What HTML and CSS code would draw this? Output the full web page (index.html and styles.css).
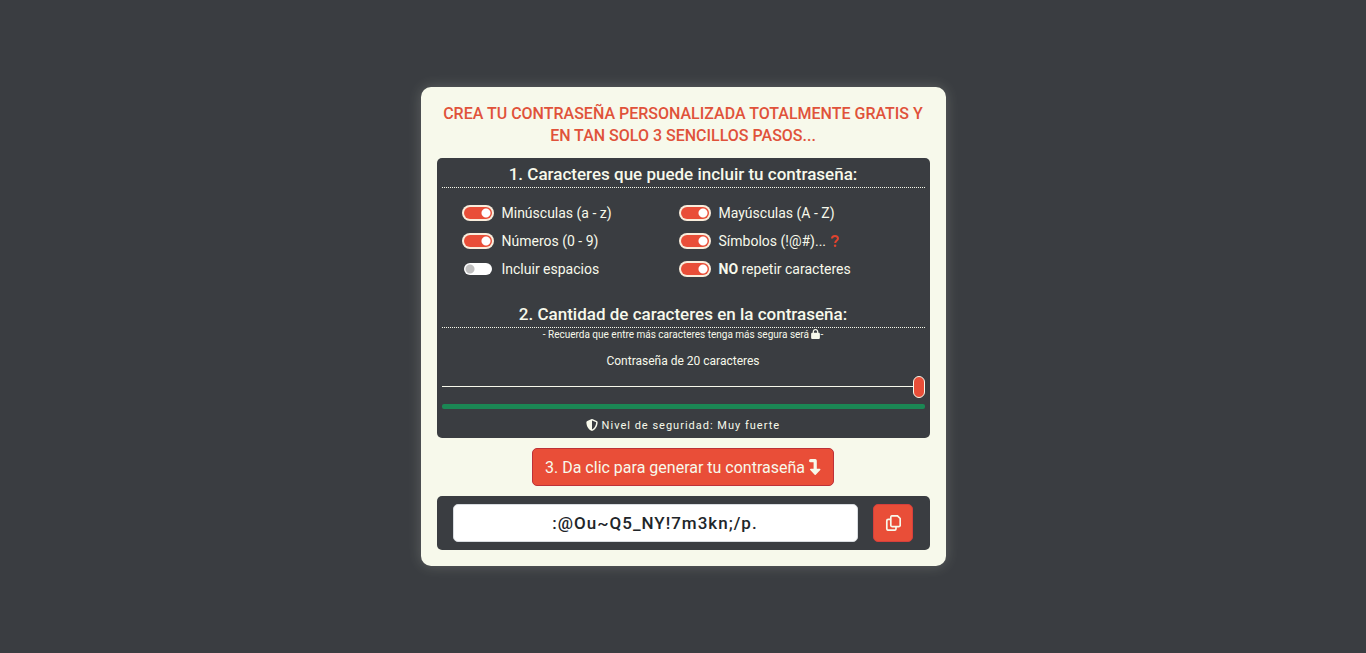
FILE: index.html
```html
<!DOCTYPE html>
<html lang="es">
<head>
<meta charset="utf-8">
<meta name="viewport" content="width=device-width, initial-scale=1">
<title>Generador de contraseñas</title>
<link rel="stylesheet" href="styles.css">
</head>
<body>
<main class="card">
  <h1 class="title">CREA TU CONTRASEÑA PERSONALIZADA TOTALMENTE GRATIS Y EN TAN SOLO 3 SENCILLOS PASOS...</h1>
  <section class="panel">
    <h2 class="step">1. Caracteres que puede incluir tu contraseña:</h2>
    <div class="options">
      <div class="column">
        <label class="option"><input class="switch" type="checkbox" checked><span>Minúsculas (a - z)</span></label>
        <label class="option"><input class="switch" type="checkbox" checked><span>Números (0 - 9)</span></label>
        <label class="option"><input class="switch" type="checkbox"><span>Incluir espacios</span></label>
      </div>
      <div class="column">
        <label class="option"><input class="switch" type="checkbox" checked><span>Mayúsculas (A - Z)</span></label>
        <label class="option"><input class="switch" type="checkbox" checked><span>Símbolos (!@#)...</span>
          <svg class="help" viewBox="0 0 8 12" aria-hidden="true"><path d="M1 3.6C1 1.8 2.4 1 4 1s3 .9 3 2.6C7 5.600 4.400 5.500 4.200 8" fill="none" stroke="currentColor" stroke-width="2"/><circle cx="4.100" cy="10.700" r="1.250" fill="currentColor"/></svg>
        </label>
        <label class="option"><input class="switch" type="checkbox" checked><span><b>NO</b> repetir caracteres</span></label>
      </div>
    </div>
    <h2 class="step">2. Cantidad de caracteres en la contraseña:</h2>
    <p class="hint">- Recuerda que entre más caracteres tenga más segura será
      <svg class="lock" viewBox="0 0 448 512" aria-hidden="true"><path fill="currentColor" d="M144 144v48h160v-48c0-44-36-80-80-80s-80 36-80 80zM80 192v-48C80 64 144 0 224 0s144 64 144 144v48h16c35 0 64 29 64 64v192c0 35-29 64-64 64H64c-35 0-64-29-64-64V256c0-35 29-64 64-64z"/></svg>-</p>
    <label class="length" for="length">Contraseña de 20 caracteres</label>
    <input class="slider" id="length" type="range" min="4" max="20" value="20">
    <div class="strength"></div>
    <p class="level">
      <svg class="shield" viewBox="0 0 512 512" aria-hidden="true"><path fill="currentColor" d="M256 0c5 0 9 1 13 3l188 80c22 9 39 31 39 57-1 100-41 281-214 363-17 8-36 8-52 0C57 421 17 240 16 140c0-26 17-48 39-57L243 3c4-2 8-3 13-3zm0 67v378c138-67 175-215 176-304z"/></svg>
      Nivel de seguridad: Muy fuerte</p>
  </section>
  <button class="generate" type="button">3. Da clic para generar tu contraseña
    <svg class="arrow" viewBox="0 0 12 16" aria-hidden="true"><path d="M1.600 1.700H6.200V11" fill="none" stroke="currentColor" stroke-width="3.200" stroke-linecap="round" stroke-linejoin="round"/><path d="M1.800 10.500H10.700L6.200 15.200Z" fill="currentColor" stroke="currentColor" stroke-width="1.500" stroke-linejoin="round"/></svg>
  </button>
  <section class="result">
    <input class="password" type="text" value=":@Ou~Q5_NY!7m3kn;/p." aria-label="Contraseña generada" readonly>
    <button class="copy" type="button" aria-label="Copiar">
      <svg class="copy-icon" viewBox="0 0 16 16" aria-hidden="true"><path fill="none" stroke="currentColor" stroke-width="1.700" stroke-linejoin="round" d="M7.300.8h5.200l2.700 2.700v6.700a1.500 1.500 0 0 1-1.500 1.500H7.300a1.500 1.500 0 0 1-1.500-1.500V2.300A1.500 1.500 0 0 1 7.300.8zM5.800 4.300H3.300A1.500 1.500 0 0 0 1.800 5.800v7.900a1.500 1.500 0 0 0 1.500 1.500h6.200a1.500 1.500 0 0 0 1.500-1.500v-2"/></svg>
    </button>
  </section>
</main>
</body>
</html>
```
FILE: styles.css
```css
* { box-sizing: border-box; }
body {
  margin: 0;
  min-height: 100vh;
  display: flex;
  align-items: center;
  justify-content: center;
  background: #3a3d41;
  color: #f7f9eb;
  font-family: Roboto, "Liberation Sans", sans-serif;
}
h1, h2, p { margin: 0; }
button, input { font-family: inherit; }
.card {
  width: 100%;
  max-width: 525px;
  padding: 16px;
  border-radius: 10px;
  background: #f7f9eb;
  box-shadow: 0 0 14px rgba(247, 249, 235, 0.2);
  display: flex;
  flex-direction: column;
}
.title {
  margin-bottom: 11px;
  color: #e0523a;
  font-size: 16px;
  font-weight: 500;
  line-height: 22px;
  text-align: center;
}
.panel {
  padding: 5px;
  border-radius: 5px;
  background: #3a3d41;
  display: flex;
  flex-direction: column;
}
.step {
  padding-bottom: 2px;
  border-bottom: 1px dotted #f7f9eb;
  font-size: 17px;
  font-weight: 500;
  line-height: 22px;
  text-align: center;
}
.options {
  display: grid;
  grid-template-columns: 217px 1fr;
  padding: 11px 22px 20px;
}
.column { display: flex; flex-direction: column; }
.option {
  display: flex;
  align-items: center;
  height: 28px;
  font-size: 14px;
}
.switch {
  appearance: none;
  flex: none;
  width: 28px;
  height: 12px;
  margin: 0 10px 0 0;
  border-radius: 6px;
  background: radial-gradient(circle at 6px 6px, #c0c0c0 4px, transparent 5px), #fff;
}
.switch:checked {
  background: radial-gradient(circle at 22px 6px, #fff 4px, transparent 5px), #e94e38;
  box-shadow: 0 0 0 2px #f9eddc;
}
.help { width: 8px; height: 12px; margin-left: 5px; color: #e0432f; }
.hint { font-size: 10px; line-height: 14px; text-align: center; }
.lock { width: 9px; height: 10px; vertical-align: -1px; }
.length { margin-top: 10px; font-size: 12px; line-height: 18px; text-align: center; }
.slider {
  appearance: none;
  width: 100%;
  height: 22px;
  margin: 6px 0;
  background: linear-gradient(#f7f9eb, #f7f9eb) 0 10px / 100% 1px no-repeat;
}
.slider::-webkit-slider-thumb {
  appearance: none;
  width: 12px;
  height: 22px;
  border: 1px solid #f7f9eb;
  border-radius: 6px;
  background: #e94e38;
}
.strength { height: 5px; border-radius: 2px; background: #1b8754; }
.level {
  margin-top: 10px;
  font-size: 11px;
  line-height: 14px;
  letter-spacing: 1px;
  text-align: center;
}
.shield { width: 12px; height: 12px; vertical-align: -2px; }
.generate {
  align-self: center;
  height: 38px;
  margin: 10px 0;
  padding: 0 12px;
  border: 1px solid #bd3138;
  border-radius: 5px;
  background: #e94e38;
  color: #f7f9eb;
  font-size: 16px;
}
.arrow { width: 12px; height: 16px; vertical-align: -2px; }
.result {
  display: flex;
  gap: 15px;
  padding: 8px 17px 8px 16px;
  border-radius: 5px;
  background: #3a3d41;
}
.password {
  flex: 1;
  min-width: 0;
  height: 38px;
  padding: 0 12px;
  border: 1px solid #d8dce0;
  border-radius: 5px;
  background: #fff;
  color: #212529;
  font-size: 17px;
  font-weight: 500;
  letter-spacing: 1px;
  text-align: center;
}
.copy {
  width: 40px;
  height: 38px;
  padding: 0;
  border: 1px solid #d63f3c;
  border-radius: 5px;
  background: #e94e38;
  color: #f7f9eb;
  display: grid;
  place-items: center;
}
.copy-icon { width: 16px; height: 16px; }
```
